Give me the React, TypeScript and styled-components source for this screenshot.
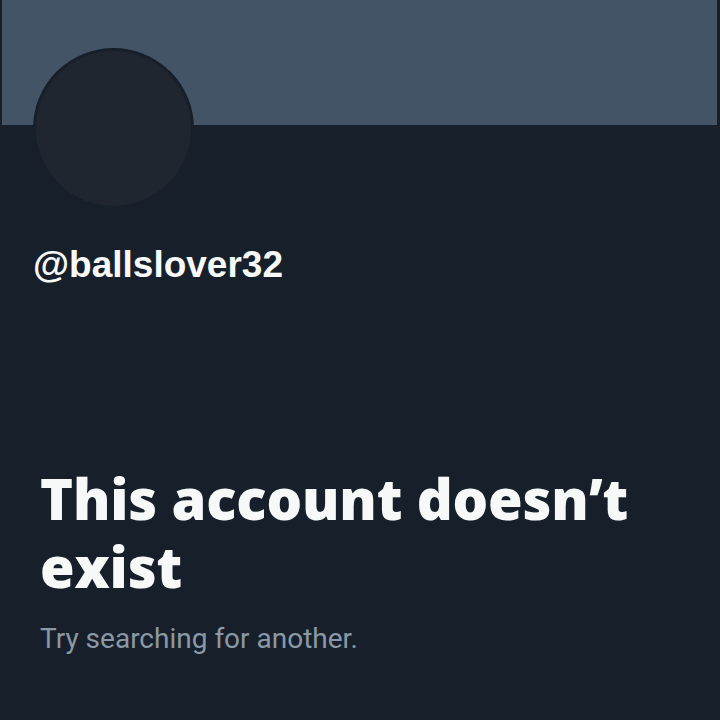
import React from "react";
import styled, { createGlobalStyle } from "styled-components";

const Global = createGlobalStyle`
  html, body { margin: 0; padding: 0; background: #17202a; }
  #root { width: 720px; height: 720px; }
`;

const Page = styled.div`
  width: 720px;
  height: 720px;
  background: #17202a;
  display: flex;
  flex-direction: column;
  overflow: hidden;
`;

const Banner = styled.div`
  height: 125px;
  margin: 0 3px 0 2px;
  background: #425466;
  flex-shrink: 0;
`;

const Header = styled.div`
  padding-left: 33px;
  display: flex;
  flex-direction: column;
`;

const Avatar = styled.div`
  width: 155px;
  height: 155px;
  margin-top: -77px;
  border-radius: 50%;
  background: #1f2630;
  border: 3px solid #17202a;
`;

const Handle = styled.div`
  margin-top: 35px;
  font-family: "Liberation Sans", Arial, sans-serif;
  font-weight: 700;
  font-size: 37px;
  line-height: 42px;
  color: #f7f9f9;
`;

const Message = styled.div`
  padding: 0 40px;
  margin-top: 178px;
  display: flex;
  flex-direction: column;
`;

const Title = styled.h1`
  margin: 0;
  font-family: "Open Sans", Roboto, sans-serif;
  font-weight: 800;
  font-size: 56px;
  line-height: 68px;
  color: #f7f9f9;
  letter-spacing: -0.15px;
`;

const Sub = styled.p`
  margin: 22px 0 0;
  font-family: Roboto, "Noto Sans", sans-serif;
  font-weight: 400;
  font-size: 28px;
  line-height: 34px;
  color: #8b98a5;
`;

export default function App() {
  return (
    <Page>
      <Global />
      <Banner />
      <Header>
        <Avatar />
        <Handle>@ballslover32</Handle>
      </Header>
      <Message>
        <Title>This account doesn’t exist</Title>
        <Sub>Try searching for another.</Sub>
      </Message>
    </Page>
  );
}
